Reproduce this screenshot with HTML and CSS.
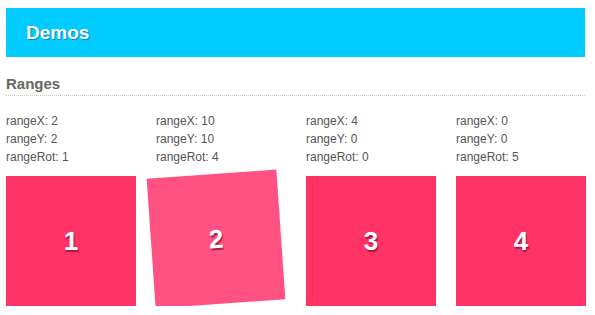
FILE: index.html
```html
<!DOCTYPE html>
<html>
<head>
<meta charset="utf-8">
<link rel="stylesheet" href="styles.css">
</head>
<body>
<header class="banner"><h1 class="title">Demos</h1></header>
<h2 class="section">Ranges</h2>
<div class="grid">
  <div class="col">
    <div class="info">rangeX: 2<br>rangeY: 2<br>rangeRot: 1</div>
    <div class="box">1</div>
  </div>
  <div class="col">
    <div class="info">rangeX: 10<br>rangeY: 10<br>rangeRot: 4</div>
    <div class="box box-moved">2</div>
  </div>
  <div class="col">
    <div class="info">rangeX: 4<br>rangeY: 0<br>rangeRot: 0</div>
    <div class="box">3</div>
  </div>
  <div class="col">
    <div class="info">rangeX: 0<br>rangeY: 0<br>rangeRot: 5</div>
    <div class="box">4</div>
  </div>
</div>
</body>
</html>
```
FILE: styles.css
```css
html, body { margin: 0; background: #fff; }
body {
  padding: 8px 10px 0 6px;
  font-family: "Liberation Sans", Arial, sans-serif;
}
.banner {
  background: #00ccff;
  height: 49px;
  display: flex;
  align-items: center;
  padding-left: 20px;
}
.title {
  margin: 0;
  color: #fff;
  font-size: 19px;
  font-weight: bold;
  text-shadow: 1px 1px 1px rgba(0,80,110,0.5);
}
.section {
  margin: 16px 0 0 0;
  font-size: 15px;
  font-weight: bold;
  color: #666;
  line-height: 22px;
  border-bottom: 1px dotted #c8c8c8;
}
.grid {
  display: grid;
  grid-template-columns: repeat(4, 130px);
  column-gap: 20px;
  margin-top: 16px;
}
.info {
  font-size: 12px;
  line-height: 18px;
  color: #555;
}
.box {
  margin-top: 10px;
  width: 130px;
  height: 130px;
  background: #ff3366;
  color: #fff;
  font-size: 26px;
  font-weight: bold;
  display: flex;
  align-items: center;
  justify-content: center;
  text-shadow: 1px 2px 1px rgba(90,0,30,0.55);
}
.box-moved {
  background: #ff5283;
  transform: translate(-5px, -2px) rotate(-4deg);
}
```
